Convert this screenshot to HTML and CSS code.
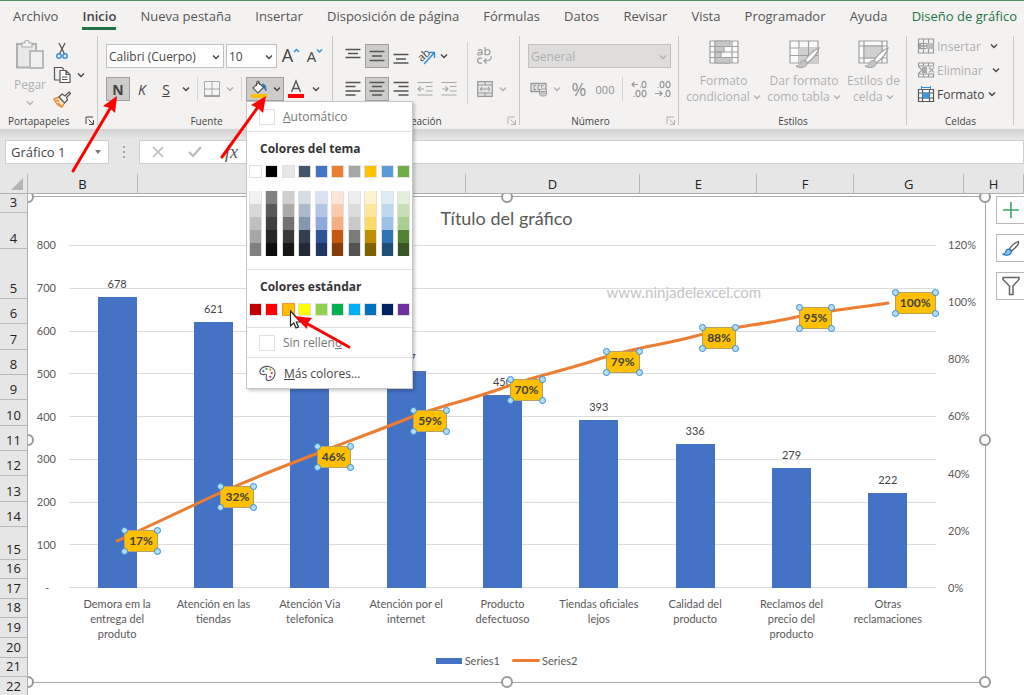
FILE: index.html
```html
<!DOCTYPE html>
<html lang="es">
<head>
<meta charset="utf-8">
<title>Gráfico de Pareto</title>
<link rel="stylesheet" href="styles.css">
</head>
<body>
<svg class="defs" aria-hidden="true">
  <symbol id="chev" viewBox="0 0 8 8"><path d="M1 2.500 4 5.500 7 2.500" fill="none" stroke="currentColor" stroke-width="1.400"/></symbol>
  <symbol id="launch" viewBox="0 0 10 10"><path d="M1 8V1H8M3.500 3.500 8 8M8.500 4V8.500H4" fill="none" stroke="currentColor"/></symbol>
  <symbol id="brush" viewBox="0 0 34 34"><path d="M32 9c-5 2-11 8-14 12.500l2.500 2.500c5-4 10-9 11.500-15z" fill="#fff" stroke="#a0a0a0" stroke-width="1.200"/><path d="M18 21.500c-3 0-4.500 1-5 3-.6 1.800-2 2.500-4 2.500 3 2.500 9 2 10.500-1 .7-1.500 1-2 1-2z" fill="#c4c4c4" stroke="#a0a0a0"/></symbol>
</svg>

<div class="app">
  <nav class="tabs">
    <a href="#">Archivo</a><a href="#" class="active">Inicio</a><a href="#">Nueva pestaña</a><a href="#">Insertar</a><a href="#">Disposición de página</a><a href="#">Fórmulas</a><a href="#">Datos</a><a href="#">Revisar</a><a href="#">Vista</a><a href="#">Programador</a><a href="#">Ayuda</a><a href="#" class="context">Diseño de gráfico</a>
  </nav>

  <div class="ribbon">
    <section class="group">
      <div class="content clip">
        <button class="big paste off">
          <svg width="30" height="32" viewBox="0 0 30 32"><path d="M2 5H21V11H14V28H2z" fill="#e9e9e9"/><path d="M21 11V5H2V28.500H14" fill="none" stroke="#b0b0b0" stroke-width="2"/><path d="M7 8V4h2.500a2.500 2.500 0 0 1 5 0H17v4z" fill="#f3f2f1" stroke="#b0b0b0" stroke-width="1.200"/><rect x="15" y="12" width="13" height="17" fill="#f0f0f0" stroke="#a8a8a8" stroke-width="1.500"/></svg>
          <span>Pegar</span>
          <svg class="chev"><use href="#chev"/></svg>
        </button>
        <div class="clip-side">
          <button class="tool" aria-label="Cortar"><svg width="18" height="18" viewBox="0 0 18 18"><path d="M6 1l5.500 11M12 1 6.500 12" fill="none" stroke="#555" stroke-width="1.300"/><circle cx="6" cy="14" r="2.200" fill="none" stroke="#2b8fd6" stroke-width="1.400"/><circle cx="12" cy="14" r="2.200" fill="none" stroke="#2b8fd6" stroke-width="1.400"/></svg></button>
          <button class="tool copy" aria-label="Copiar"><svg width="18" height="18" viewBox="0 0 18 18"><path d="M7 14H1.500V1.500H9l2 2" fill="none" stroke="#555" stroke-width="1.200"/><path d="M7 4.500h6l4 4v8H7zM13 4.500v4h4M9 11h5.500M9 13.500h5.500" fill="#fff" stroke="#555" stroke-width="1.200"/></svg><svg class="chev"><use href="#chev"/></svg></button>
          <button class="tool" aria-label="Copiar formato"><svg width="18" height="18" viewBox="0 0 18 18"><path d="M1 9l5-2 6 5-3 5c-4-1-6-3-8-8z" fill="#fce3c4" stroke="#e8892b" stroke-width="1.400"/><path d="M5 13l3 3M3 10.500l3 .5" stroke="#e8892b" stroke-width="1.400"/><path d="M6 7l3-3 3 2 4-4 1.500 1.500-4 4 1 2.500-3 3z" fill="#f6f6f6" stroke="#555" stroke-width="1.200"/></svg></button>
        </div>
      </div>
      <footer><span>Portapapeles</span><svg class="launch"><use href="#launch"/></svg></footer>
    </section>

    <section class="group off-center">
      <div class="content rows font">
        <div class="row">
          <label class="combo face"><select aria-label="Fuente"><option>Calibri (Cuerpo)</option></select><svg class="chev"><use href="#chev"/></svg></label>
          <label class="combo size"><select aria-label="Tamaño"><option>10</option></select><svg class="chev"><use href="#chev"/></svg></label>
          <button class="tool w24 grow">A<svg width="7" height="6" viewBox="0 0 7 6"><path d="M1 4 3.500 1.500 6 4" fill="none" stroke="#2b8fd6" stroke-width="1.400"/></svg></button>
          <button class="tool w24 grow small">A<svg width="7" height="6" viewBox="0 0 7 6"><path d="M1 1.500 3.500 4 6 1.500" fill="none" stroke="#2b8fd6" stroke-width="1.400"/></svg></button>
        </div>
        <div class="row">
          <button class="tool w24 pressed bold">N</button>
          <button class="tool w24 italic">K</button>
          <button class="tool w24 under">S</button>
          <button class="tool w16" aria-label="Más subrayado"><svg class="chev"><use href="#chev"/></svg></button>
          <i class="bar"></i>
          <button class="tool w20 off" aria-label="Bordes"><svg width="16" height="16" viewBox="0 0 16 16"><path d="M.5.500h15v15H.500zM8 1v14M1 8h14" fill="#f6f6f6" stroke="#a6a6a6"/><path d="M0 15h16" stroke="#a0a0a0" stroke-width="2"/></svg></button>
          <button class="tool w16 off" aria-label="Más bordes"><svg class="chev"><use href="#chev"/></svg></button>
          <i class="bar"></i>
          <div class="fill">
            <button class="tool pressed fill-button" aria-label="Color de relleno"><svg width="18" height="18" viewBox="0 0 18 18"><path d="M3 8l5.500-5.500 5 5L8 13z" fill="#fff" stroke="#555" stroke-width="1.200"/><path d="M6.500 6V2.500a1.500 1.500 0 0 1 3 0V5" fill="none" stroke="#555"/><path d="M12 4c3 0 4 2 4 7-1.500-3-2-4-4-7z" fill="#1d75bd" stroke="#1d75bd"/><rect x="1" y="14" width="16" height="4" fill="#ffc000"/></svg><svg class="chev"><use href="#chev"/></svg></button>
            <div class="menu" role="menu">
              <button class="item"><i class="box"></i><span><u>A</u>utomático</span></button>
              <hr>
              <h2>Colores del tema</h2>
              <div class="swatches">
                <i style="background:#fff"></i><i style="background:#000"></i><i style="background:#e7e6e6"></i><i style="background:#44546a"></i><i style="background:#4472c4"></i><i style="background:#ed7d31"></i><i style="background:#a5a5a5"></i><i style="background:#ffc000"></i><i style="background:#5b9bd5"></i><i style="background:#70ad47"></i>
              </div>
              <div class="swatches tints">
                <div><i style="background:#f2f2f2"></i><i style="background:#d9d9d9"></i><i style="background:#bfbfbf"></i><i style="background:#a6a6a6"></i><i style="background:#808080"></i></div>
                <div><i style="background:#808080"></i><i style="background:#595959"></i><i style="background:#404040"></i><i style="background:#262626"></i><i style="background:#0d0d0d"></i></div>
                <div><i style="background:#d0cece"></i><i style="background:#aeaaaa"></i><i style="background:#757171"></i><i style="background:#3a3838"></i><i style="background:#161616"></i></div>
                <div><i style="background:#d6dce4"></i><i style="background:#acb9ca"></i><i style="background:#8497b0"></i><i style="background:#333f4f"></i><i style="background:#222b35"></i></div>
                <div><i style="background:#d9e1f2"></i><i style="background:#b4c6e7"></i><i style="background:#8ea9db"></i><i style="background:#305496"></i><i style="background:#203764"></i></div>
                <div><i style="background:#fce4d6"></i><i style="background:#f8cbad"></i><i style="background:#f4b084"></i><i style="background:#c65911"></i><i style="background:#833c0c"></i></div>
                <div><i style="background:#ededed"></i><i style="background:#dbdbdb"></i><i style="background:#c9c9c9"></i><i style="background:#7b7b7b"></i><i style="background:#525252"></i></div>
                <div><i style="background:#fff2cc"></i><i style="background:#ffe699"></i><i style="background:#ffd966"></i><i style="background:#bf8f00"></i><i style="background:#806000"></i></div>
                <div><i style="background:#ddebf7"></i><i style="background:#bdd7ee"></i><i style="background:#9bc2e6"></i><i style="background:#2f75b5"></i><i style="background:#1f4e78"></i></div>
                <div><i style="background:#e2efda"></i><i style="background:#c6e0b4"></i><i style="background:#a9d08e"></i><i style="background:#548235"></i><i style="background:#375623"></i></div>
              </div>
              <hr>
              <h2>Colores estándar</h2>
              <div class="swatches standard">
                <i style="background:#c00000"></i><i style="background:#f00"></i><i class="hover" style="background:#ffc000"></i><i style="background:#ff0"></i><i style="background:#92d050"></i><i style="background:#00b050"></i><i style="background:#00b0f0"></i><i style="background:#0070c0"></i><i style="background:#002060"></i><i style="background:#7030a0"></i>
              </div>
              <hr>
              <button class="item"><i class="box"></i><span>Sin rellen<u>o</u></span></button>
              <hr>
              <button class="item dark"><svg width="17" height="17" viewBox="0 0 18 18"><path d="M9 1.500C4 1 .8 4.500 1 7.500c.2 2.500 3 3 4.500 2.500 2-.5 3 .5 2.200 2.300C7 14.500 8 16.500 10 16.500c4 0 7-3.500 7-8 0-4-3.500-6.700-8-7z" fill="#fff" stroke="#555" stroke-width="1.200"/><circle cx="4.500" cy="6.500" r="1.200" fill="#2b8fd6"/><circle cx="8" cy="4" r="1.200" fill="#31a354"/><circle cx="12" cy="5" r="1.200" fill="#ed7d31"/><circle cx="13.500" cy="8.500" r="1.200" fill="#d33"/><circle cx="12" cy="12.500" r="1.200" fill="#a040a0"/></svg><span><u>M</u>ás colores...</span></button>
            </div>
          </div>
          <button class="tool w24" aria-label="Color de fuente"><svg width="18" height="20" viewBox="0 0 18 20"><path d="M4.500 13 9 2l4.500 11M6 9.500h6" fill="none" stroke="#555" stroke-width="1.400"/><rect x="1" y="15" width="16" height="4" fill="#f00"/></svg></button>
          <button class="tool w16" aria-label="Más colores de fuente"><svg class="chev"><use href="#chev"/></svg></button>
        </div>
      </div>
      <footer><span>Fuente</span></footer>
    </section>

    <section class="group off-center">
      <div class="content align">
        <div class="rows">
          <div class="row">
            <button class="tool w24" aria-label="Alinear arriba"><svg class="i16" viewBox="0 0 16 16"><path d="M.5 1.500h15M3 5.500h10M.5 9.500h15" stroke="#555" stroke-width="1.400"/></svg></button>
            <button class="tool w24 pressed" aria-label="Alinear en el medio"><svg class="i16" viewBox="0 0 16 16"><path d="M.5 3.500h15M3 8h10M.5 12.500h15" stroke="#555" stroke-width="1.400"/></svg></button>
            <button class="tool w24" aria-label="Alinear abajo"><svg class="i16" viewBox="0 0 16 16"><path d="M.5 6.500h15M3 11h10M.5 15h15" stroke="#555" stroke-width="1.400"/></svg></button>
            <button class="tool orient" aria-label="Orientación"><svg width="20" height="18" viewBox="0 0 20 18"><text x="1" y="12" transform="rotate(-42 7 9)" font-size="11" fill="#444">ab</text><path d="M7 17 17 6M11.500 5.500H17.500V11" fill="none" stroke="#2b8fd6" stroke-width="1.400"/></svg><svg class="chev"><use href="#chev"/></svg></button>
          </div>
          <div class="row">
            <button class="tool w24" aria-label="Izquierda"><svg class="i16" viewBox="0 0 16 16"><path d="M.5 1.500h15M.5 5.500h10M.5 10h15M.5 14h10" stroke="#555" stroke-width="1.400"/></svg></button>
            <button class="tool w24 pressed" aria-label="Centrar"><svg class="i16" viewBox="0 0 16 16"><path d="M.5 1.500h15M3 5.500h10M.5 10h15M3 14h10" stroke="#555" stroke-width="1.400"/></svg></button>
            <button class="tool w24" aria-label="Derecha"><svg class="i16" viewBox="0 0 16 16"><path d="M.5 1.500h15M5.500 5.500h10M.5 10h15M5.500 14h10" stroke="#555" stroke-width="1.400"/></svg></button>
            <button class="tool w24 off" aria-label="Disminuir sangría"><svg class="i16" viewBox="0 0 16 16"><path d="M.5 1.500h15M9 5.500h6.500M9 10h6.500M.5 14h15M1 8h6M3.500 5.500 1 8l2.500 2.500" fill="none" stroke="#a8a8a8" stroke-width="1.200"/></svg></button>
            <button class="tool w24 off" aria-label="Aumentar sangría"><svg class="i16" viewBox="0 0 16 16"><path d="M.5 1.500h15M9 5.500h6.500M9 10h6.500M.5 14h15M1 8h6M4.500 5.500 7 8l-2.500 2.500" fill="none" stroke="#a8a8a8" stroke-width="1.200"/></svg></button>
          </div>
        </div>
        <i class="bar tall"></i>
        <div class="rows">
          <button class="tool w24 off" aria-label="Ajustar texto"><svg width="16" height="20" viewBox="0 0 16 20"><path d="M2 4.500c3-2 4-.5 4 1V9M6 6C1 6 1 9 3 9c1.500 0 3-1 3-2M9 1v8M9 6c0-3 5-3 5 0s-5 4-5 1M6 12.500c-6-2-6 6 0 4.500" fill="none" stroke="#999" stroke-width="1.200"/><path d="M15 10v2c0 2-2 3-7 3M10.500 12.500 8 15l2.500 2.500" fill="none" stroke="#a0a0a0" stroke-width="1.200"/></svg></button>
          <button class="tool merge off" aria-label="Combinar"><svg class="i16" viewBox="0 0 16 16"><path d="M.7.700h14.600v14.600H.7zM1 4h14M1 12h14M8 1v3M8 12v3" fill="#e4e4e4" stroke="#999" stroke-width="1.200"/><path d="M3 8h10M5 6 3 8l2 2M11 6l2 2-2 2" fill="none" stroke="#999"/></svg><svg class="chev"><use href="#chev"/></svg></button>
        </div>
      </div>
      <footer><span>Alineación</span><svg class="launch off"><use href="#launch"/></svg></footer>
    </section>

    <section class="group off-center">
      <div class="content rows number">
        <label class="combo format"><select aria-label="Formato de número" disabled><option>General</option></select><svg class="chev"><use href="#chev"/></svg></label>
        <div class="row off">
          <button class="tool cash" aria-label="Moneda"><svg width="18" height="16" viewBox="0 0 18 16"><path d="M1 2.500h15v8H1z" fill="#e4e4e4" stroke="#999" stroke-width="1.300"/><path d="M6 4.500H4v4h2M10 4.500H8v4h2M13.500 4.500h-2v2" fill="none" stroke="#999"/><path d="M9.500 9.500c0-2 7-2 7 0v4c0 2-7 2-7 0zM9.500 10c0 1.500 7 1.500 7 0M9.500 12c0 1.500 7 1.500 7 0" fill="#eee" stroke="#999"/></svg><svg class="chev"><use href="#chev"/></svg></button>
          <button class="tool w24 percent">%</button>
          <button class="tool w24 zeros">000</button>
          <i class="bar"></i>
          <button class="tool w24" aria-label="Aumentar decimales"><svg width="18" height="18" viewBox="0 0 18 18" fill="none" stroke="#999" stroke-width="1.200"><ellipse cx="14" cy="4.500" rx="2" ry="3.200"/><ellipse cx="8" cy="13.500" rx="2" ry="3.200"/><ellipse cx="14" cy="13.500" rx="2" ry="3.200"/><path d="M10 7h1M3.500 16.500h1M8 4.500H2M4.500 2 2 4.500 4.500 7"/></svg></button>
          <button class="tool w24" aria-label="Disminuir decimales"><svg width="18" height="18" viewBox="0 0 18 18" fill="none" stroke="#999" stroke-width="1.200"><ellipse cx="8" cy="4.500" rx="2" ry="3.200"/><ellipse cx="14" cy="4.500" rx="2" ry="3.200"/><ellipse cx="14" cy="13.500" rx="2" ry="3.200"/><path d="M3.500 7.500h1M10 16.500h1M1 13.500h7M5.500 11 8 13.500 5.500 16"/></svg></button>
        </div>
      </div>
      <footer><span>Número</span><svg class="launch off"><use href="#launch"/></svg></footer>
    </section>

    <section class="group">
      <div class="content styles off">
        <button class="big"><svg width="34" height="30" viewBox="0 0 34 30"><path d="M3 3h28v22H3zM3 8.500h28M3 14h28M3 19.500h28M8 3v22M25 3v22" fill="#fafafa" stroke="#a0a0a0" stroke-width="1.200"/><path d="M8 3h15v5.500H8zM8 8.500h9v5.500H8zM8 14h6v5.500H8zM8 19.500h15V25H8z" fill="#c8c8c8" stroke="#a0a0a0"/></svg><span>Formato<br>condicional <svg class="chev"><use href="#chev"/></svg></span></button>
        <button class="big"><svg width="34" height="30" viewBox="0 0 34 30"><path d="M3 3h28v22H3zM3 10h28M3 17.500h28M12 3v22M21.500 3v22" fill="#fafafa" stroke="#a0a0a0" stroke-width="1.200"/><path d="M12 10h19v15H12z" fill="#d0d0d0"/><path d="M12 17.500h19M21.500 10v15" stroke="#a0a0a0"/><use href="#brush" width="34" height="34" y="1"/></svg><span>Dar formato<br>como tabla <svg class="chev"><use href="#chev"/></svg></span></button>
        <button class="big"><svg width="34" height="30" viewBox="0 0 34 30"><path d="M3 3h28v22H3zM3 8h28M3 20h28M8 3v22M26 3v22" fill="#fafafa" stroke="#a0a0a0" stroke-width="1.200"/><path d="M8 8h18v12H8z" fill="#d0d0d0" stroke="#a0a0a0"/><use href="#brush" width="34" height="34" y="1"/></svg><span>Estilos de<br>celda <svg class="chev"><use href="#chev"/></svg></span></button>
      </div>
      <footer><span>Estilos</span></footer>
    </section>

    <section class="group">
      <div class="content cells">
        <button class="tool off"><svg class="i16" viewBox="0 0 16 16"><path d="M.5 1h15v14H.500zM1 5.500h14M1 10.500h14M5.500 1v14M10.500 1v14" fill="#f4f4f4" stroke="#999" stroke-width="1.200"/><path d="M8 5h7.500v6H8z" fill="#bbb"/><path d="M0 8h9M3.500 5 .5 8l3 3" fill="none" stroke="#999" stroke-width="1.500"/></svg><span>Insertar</span><svg class="chev far"><use href="#chev"/></svg></button>
        <button class="tool off"><svg class="i16" viewBox="0 0 16 16"><path d="M.5 1h15v3H.500zM.5 12h15v3H.500zM5.500 1v3M10.500 1v3M5.500 12v3M10.500 12v3M1 4v1l3 3-3 3v1" fill="#f4f4f4" stroke="#999" stroke-width="1.200"/><path d="M4 5h5v6H4z" fill="#aaa"/><path d="m11 5.500 5 5m0-5-5 5" stroke="#aaa" stroke-width="1.400"/></svg><span>Eliminar</span><svg class="chev far"><use href="#chev"/></svg></button>
        <button class="tool"><svg class="i16" viewBox="0 0 16 16"><path d="M.5 3.500h15v12H.500zM1 7h14M1 12h14M4.500 4v11M11.500 4v11" fill="#fff" stroke="#555" stroke-width="1.200"/><path d="M4.500 6.500h7v6h-7z" fill="#3a96dd"/><path d="M3.500 1.500h9M3.500 0v3.500M12.500 0v3.500" stroke="#2b8fd6"/></svg><span>Formato</span><svg class="chev"><use href="#chev"/></svg></button>
      </div>
      <footer><span>Celdas</span></footer>
    </section>
  </div>

  <div class="formula-bar">
    <label class="namebox"><input aria-label="Cuadro de nombres" value="Gráfico 1"><svg width="8" height="6" viewBox="0 0 8 6"><path d="M1 1h6L4 5z" fill="#777"/></svg></label>
    <svg class="dots" width="4" height="14" viewBox="0 0 4 14"><path d="M2 1v2M2 6v2M2 11v2" stroke="#aaa" stroke-width="2"/></svg>
    <div class="formula">
      <svg width="14" height="14" viewBox="0 0 14 14"><path d="m2 2 10 10M12 2 2 12" stroke="#bbb" stroke-width="1.600"/></svg>
      <svg width="16" height="14" viewBox="0 0 16 14"><path d="m2 7 4 4 8-9" fill="none" stroke="#bbb" stroke-width="2.200"/></svg>
      <em>fx</em>
      <input aria-label="Barra de fórmulas">
    </div>
  </div>

  <div class="columns">
    <span class="corner"><svg width="14" height="14" viewBox="0 0 14 14"><path d="M13 1v12H1z" fill="#b5b5b5"/></svg></span><span>B</span><span>C</span><span>D</span><span>E</span><span>F</span><span>G</span><span>H</span>
  </div>

  <div class="sheet">
    <div class="numbers">
      <span style="height:19px">3</span><span style="height:36px">4</span><span style="height:50px">5</span><span style="height:25px">6</span><span style="height:26px">7</span><span style="height:25px">8</span><span style="height:25px">9</span><span style="height:26px">10</span><span style="height:25px">11</span><span style="height:25px">12</span><span style="height:26px">13</span><span style="height:25px">14</span><span style="height:33px">15</span><span style="height:19px">16</span><span style="height:20px">17</span><span style="height:19px">18</span><span style="height:20px">19</span><span style="height:20px">20</span><span style="height:19px">21</span><span style="height:20px">22</span>
    </div>
    <main class="canvas">
      <div class="chart">
        <h1>Título del gráfico</h1>
        <div class="body">
          <div class="axis left"><span>800</span><span>700</span><span>600</span><span>500</span><span>400</span><span>300</span><span>200</span><span>100</span><span class="zero">-</span></div>
          <div class="plot">
            <div class="lines"><i></i><i></i><i></i><i></i><i></i><i></i><i></i><i></i><i></i></div>
            <div class="bars">
              <div style="--v:678"><span>678</span></div><div style="--v:621"><span>621</span></div><div style="--v:564"><span>564</span></div><div style="--v:507"><span>507</span></div><div style="--v:450"><span>450</span></div><div style="--v:393"><span>393</span></div><div style="--v:336"><span>336</span></div><div style="--v:279"><span>279</span></div><div style="--v:222"><span>222</span></div>
            </div>
            <svg class="trend" viewBox="0 0 866 343" preserveAspectRatio="none"><path d="M48 296C80 281 112 266 144 251S208 224 241 211 305 187 337 174 401 155 433 143 497 125 529 114 593 100 626 91 690 80 722 73 786 63 818 58" fill="none" stroke="#ed7d31" stroke-width="3" stroke-linecap="round"/></svg>
            <div class="points">
              <b style="--n:0;--y:296"><i></i><i></i><i></i><i></i>17%</b><b style="--n:1;--y:252"><i></i><i></i><i></i><i></i>32%</b><b style="--n:2;--y:212"><i></i><i></i><i></i><i></i>46%</b><b style="--n:3;--y:176"><i></i><i></i><i></i><i></i>59%</b><b style="--n:4;--y:145"><i></i><i></i><i></i><i></i>70%</b><b style="--n:5;--y:117"><i></i><i></i><i></i><i></i>79%</b><b style="--n:6;--y:93"><i></i><i></i><i></i><i></i>88%</b><b style="--n:7;--y:73"><i></i><i></i><i></i><i></i>95%</b><b style="--n:8;--y:58"><i></i><i></i><i></i><i></i>100%</b>
            </div>
            <span class="mark">www.ninjadelexcel.com</span>
          </div>
          <div class="axis right"><span>120%</span><span>100%</span><span>80%</span><span>60%</span><span>40%</span><span>20%</span><span>0%</span></div>
          <div class="cats"><span>Demora em la<br>entrega del<br>produto</span><span>Atención en las<br>tiendas</span><span>Atención Via<br>telefonica</span><span>Atención por el<br>internet</span><span>Producto<br>defectuoso</span><span>Tiendas oficiales<br>lejos</span><span>Calidad del<br>producto</span><span>Reclamos del<br>precio del<br>producto</span><span>Otras<br>reclamaciones</span></div>
        </div>
        <div class="legend"><i class="key-bar"></i><span>Series1</span><i class="key-line"></i><span>Series2</span></div>
        <i class="grip tl"></i><i class="grip tc"></i><i class="grip tr"></i><i class="grip ml"></i><i class="grip mr"></i><i class="grip bl"></i><i class="grip bc"></i><i class="grip br"></i>
      </div>
      <div class="side">
        <button aria-label="Elementos de gráfico"><svg width="18" height="18" viewBox="0 0 18 18"><path d="M9 1v16M1 9h16" stroke="#3fa564" stroke-width="1.600"/></svg></button>
        <button aria-label="Estilos de gráfico"><svg width="18" height="18" viewBox="0 0 18 18"><path d="M16.500 2.500C12 4 9 7.500 7.500 10l2 2C13 9.500 17.500 5 16.500 2.500z" fill="#fff" stroke="#555" stroke-width="1.200"/><path d="M7 10c-3 0-3 2-3.500 3.500-.5 1-1.500 1.500-2.500 1.500 2 2 7 1.500 8-1 .5-1.500 0-3-2-4z" fill="#8cc4ee" stroke="#1d75bd" stroke-width="1.200"/></svg></button>
        <button aria-label="Filtros de gráfico"><svg width="18" height="20" viewBox="0 0 18 20"><path d="M1 1.500h16v2L11 10v8.500H7.500V10L1 3.500z" fill="#fff" stroke="#666" stroke-width="1.500"/></svg></button>
      </div>
    </main>
  </div>

  <svg class="arrow a1" width="52" height="82" viewBox="0 0 52 82"><path d="M4 78 42 14" stroke="red" stroke-width="3" stroke-linecap="round"/><path d="M48 3 46 20 41 15 34 13z" fill="red"/></svg>
  <svg class="arrow a2" width="52" height="68" viewBox="0 0 52 68"><path d="M4 64 40 14" stroke="red" stroke-width="3" stroke-linecap="round"/><path d="M48 3 45 20 40 15 33 12z" fill="red"/></svg>
  <svg class="cursor" width="14" height="20" viewBox="0 0 14 20"><path d="M1.500 1v15l3.300-3 2.200 5 2.500-1-2.200-5h4.500z" fill="#fff" stroke="#222" stroke-width="1.200"/></svg>
  <svg class="arrow a3" width="62" height="40" viewBox="0 0 62 40"><path d="M57 36 14 12" stroke="red" stroke-width="3" stroke-linecap="round"/><path d="M2 5 20 7 16 12 15 18z" fill="red"/></svg>
</div>
</body>
</html>
```

FILE: styles.css
```css
* { box-sizing: border-box; }
body { margin: 0; font-family: "Open Sans", "Noto Sans", sans-serif; font-size: 12px; color: #444; }
button, input, select { font: inherit; color: inherit; margin: 0; padding: 0; border: 0; background: none; appearance: none; }
h1, h2, hr { margin: 0; font: inherit; }
svg { display: block; flex: none; overflow: visible; }
.defs { position: absolute; width: 0; height: 0; }
.app { position: relative; height: 100vh; overflow: hidden; border-top: 1px solid #4a9068; background: #fff; }

.tabs { display: flex; justify-content: space-between; height: 32px; padding: 4px 7px 0 13px; background: #f3f2f1; font-size: 13px; line-height: 22px; white-space: nowrap; }
.tabs a { height: 25px; color: #555; text-decoration: none; }
.tabs .active { border-bottom: 3px solid #217346; font-weight: 600; color: #444; }
.tabs .context { color: #217346; }

.ribbon { display: grid; grid-template-columns: 98fr 235fr 187fr 159fr 228fr 107fr 10fr; height: 96px; background: #f3f2f1; }
.group { display: flex; flex-direction: column; min-width: 0; position: relative; }
.group::after { content: ""; position: absolute; right: 0; top: 3px; bottom: 4px; width: 1px; background: #c8c8c8; }
.group footer { display: flex; justify-content: center; align-items: center; position: relative; height: 16px; font-size: 10px; line-height: 16px; }
.group:first-child footer { justify-content: flex-start; padding-left: 8px; }
.off-center footer { padding-right: 18px; }
.content { height: 80px; }
.rows { display: flex; flex-direction: column; gap: 9px; padding-top: 11px; }
.row { display: flex; height: 24px; align-items: stretch; }
.chev { width: 8px; height: 8px; }
.launch { position: absolute; right: 3px; width: 10px; height: 10px; }
.off { color: #b0b0b0; }
.tool { display: flex; align-items: center; justify-content: center; height: 24px; }
.w24 { width: 24px; } .w20 { width: 20px; } .w16 { width: 16px; }
.i16 { width: 16px; height: 16px; }
.pressed { background: #cdcccb; border: 1px solid #a0a0a0; }
.bar { width: 1px; background: #d4d4d4; margin: 0 4px 0 3px; }
.big { display: flex; flex-direction: column; align-items: center; line-height: 16px; }
.big span .chev { display: inline-block; }

.clip { display: flex; padding: 6px 0 0 13px; }
.paste { width: 34px; padding-bottom: 6px; justify-content: space-between; }
.clip-side { display: flex; flex-direction: column; padding-left: 6px; }
.clip-side .tool { justify-content: flex-start; gap: 6px; }

.font { padding-left: 8px; }
.combo { position: relative; display: flex; height: 24px; background: #fff; border: 1px solid #c0c0c0; }
.combo select { width: 100%; padding-left: 2px; }
.combo .chev { position: absolute; right: 3px; top: 8px; pointer-events: none; }
.face { width: 118px; margin-right: 2px; }
.size { width: 51px; margin-right: 2px; }
.format { width: 143px; background: #dedddc; color: #b0b0b0; }
.format select:disabled { opacity: 1; color: #b0b0b0; }
.grow { font-size: 18px; align-items: flex-start; line-height: 22px; }
.grow svg { margin-top: 4px; }
.grow.small { font-size: 15px; line-height: 24px; }
.bold { font-weight: 700; font-size: 14px; }
.italic { font-style: italic; font-size: 14px; }
.under { text-decoration: underline; font-size: 14px; }
.fill { position: relative; }
.fill-button { width: 38px; gap: 5px; }

.menu { position: absolute; z-index: 5; left: 0; top: 100%; width: 167px; background: #fff; border: 1px solid #c6c6c6; box-shadow: 2px 2px 3px #0003; color: #333; }
.menu hr { border: 0; border-top: 1px solid #e1e1e1; }
.menu h2 { padding-left: 13px; font-weight: 700; line-height: 18px; margin: 8px 0 7px; }
.item { display: flex; align-items: center; gap: 8px; width: 100%; height: 29px; padding-left: 12px; color: #777; }
.item.dark { height: 30px; color: #444; }
.box { width: 16px; height: 16px; border: 1px solid #e1e1e1; }
.swatches { display: flex; justify-content: space-between; padding: 0 2px; }
.swatches > * { width: 13px; height: 13px; border: 1px solid #e1e1e1; }
.tints { margin: 13px 0; }
.tints > div { height: auto; border-width: 0 1px; }
.tints i { display: block; height: 13px; }
.standard { margin-bottom: 11px; }
.swatches .hover { border-color: #f29436; }

.align { display: flex; padding-left: 8px; }
.orient { width: 34px; gap: 3px; margin-left: 2px; }
.bar.tall { margin: 9px 4px 9px 6px; }
.merge { width: 40px; gap: 6px; }
.number { padding-left: 8px; }
.cash { width: 34px; gap: 5px; margin-right: 5px; }
.percent { font-size: 18px; color: #909090; }
.zeros { font-size: 11px; margin: 0 2px; color: #909090; }

.styles { display: flex; justify-content: space-around; padding: 5px 4px 0; }
.styles .big { gap: 5px; color: inherit; }
.cells { padding: 1px 0 0 11px; }
.cells .tool { gap: 3px; }
.cells .far { margin-left: 6px; color: #444; }

.formula-bar { display: flex; height: 35px; padding: 11px 0 0 5px; background: linear-gradient(#d2d2d2, #e6e6e6 10px); }
.namebox { display: flex; align-items: center; width: 104px; height: 24px; padding: 0 6px 0 5px; background: #fff; border: 1px solid #cfcfcf; font-size: 13px; }
.namebox input { flex: 1; min-width: 0; }
.dots { margin: 5px 13px 0; }
.formula { flex: 1; display: flex; align-items: center; gap: 22px; padding-left: 11px; background: #fff; border: 1px solid #cfcfcf; }
.formula em { font: italic 18px "Liberation Serif", serif; color: #555; }
.formula input { flex: 1; }

.columns { display: grid; grid-template-columns: 28fr 110fr 328fr 175fr 117fr 97fr 110fr 60fr; height: 30px; background: #e6e6e6; border-bottom: 1px solid #b0b0b0; }
.columns span { display: flex; justify-content: center; align-items: flex-end; line-height: 20px; margin-top: 10px; border-right: 1px solid #b8b8b8; color: #222; font-size: 13px; }
.columns .corner { padding: 0 0 3px 8px; }

.sheet { display: flex; }
.numbers { width: 28px; flex: none; z-index: 2; background: #e6e6e6; border-right: 1px solid #b0b0b0; color: #222; font-size: 13px; line-height: 19px; }
.numbers span { display: flex; align-items: flex-end; justify-content: center; border-bottom: 1px solid #b8b8b8; }
.canvas { flex: 1; display: flex; align-items: flex-start; min-width: 0; overflow: hidden; padding-top: 2px; }
.chart { position: relative; flex: 1; min-width: 0; padding: 9px 0 14px; border: 1px solid #a8a8a8; border-left: 0; font-family: Lato, "Open Sans", sans-serif; font-size: 11px; color: #595959; }
.chart h1 { text-align: center; font-size: 18px; line-height: 24px; margin-bottom: 15px; }
.body { display: grid; grid-template-columns: 41px 1fr 49px; }
.axis { display: flex; flex-direction: column; justify-content: space-between; margin: -7px 0; line-height: 14px; }
.left { align-items: flex-end; padding-right: 13px; }
.zero { padding-right: 7px; }
.right { padding-left: 12px; }
.plot { position: relative; height: 343px; }
.lines { position: absolute; inset: 0; display: flex; flex-direction: column; justify-content: space-between; }
.lines i { height: 1px; background: #dcdcdc; }
.bars { position: relative; display: flex; justify-content: space-around; align-items: flex-end; height: 100%; }
.bars div { width: 39px; height: calc(var(--v) / 800 * 100%); background: #4472c4; }
.bars span { display: block; line-height: 14px; margin-top: -20px; text-align: center; color: #444; }
.trend { position: absolute; inset: 0; width: 100%; height: 100%; }
.points b { position: absolute; left: calc((var(--n) + 0.5) / 9 * 100% + 7px); top: calc(var(--y) / 343 * 100%); transform: translateY(-50%); padding: 0 4px; background: #ffc000; border: 1px solid #b8a060; font-size: 12px; line-height: 20px; color: #404040; }
.points i { position: absolute; width: 7px; height: 7px; border: 1px solid #2b8fd6; border-radius: 50%; background: #b8dcf5; }
.points i:nth-child(1) { left: -4px; top: -4px; }
.points i:nth-child(2) { right: -4px; top: -4px; }
.points i:nth-child(3) { left: -4px; bottom: -4px; }
.points i:nth-child(4) { right: -4px; bottom: -4px; }
.mark { position: absolute; left: 62%; top: 38px; font-size: 15px; line-height: 18px; color: #c4c4c4; }
.cats { grid-column: 2; display: grid; grid-template-columns: repeat(9, 1fr); margin-top: 8px; text-align: center; line-height: 15px; white-space: nowrap; }
.legend { display: flex; align-items: center; justify-content: center; margin-top: 12px; line-height: 15px; }
.key-bar { width: 26px; height: 6px; margin-right: 3px; background: #4472c4; }
.key-line { width: 28px; height: 3px; margin: 0 2px 0 12px; border-radius: 2px; background: #ed7d31; }
.grip { position: absolute; width: 12px; height: 12px; border: 2px solid #999; border-radius: 50%; background: #fff; }
.tl, .tc, .tr { top: -6px; } .bl, .bc, .br { bottom: -6px; }
.ml, .mr { top: calc(50% - 6px); }
.tl, .ml, .bl { left: -6px; } .tr, .mr, .br { right: -6px; }
.tc, .bc { left: calc(50% - 6px); }
.side { display: flex; flex-direction: column; gap: 10px; width: 28px; margin-left: 10px; flex: none; }
.side button { display: flex; align-items: center; justify-content: center; height: 28px; border: 1px solid #b8b8b8; border-right: 0; background: #fff; }

.arrow, .cursor { position: absolute; z-index: 8; pointer-events: none; }
.a1 { left: 69px; top: 92px; }
.a2 { left: 218px; top: 92px; }
.a3 { left: 292px; top: 310px; }
.cursor { left: 289px; top: 309px; }
```
